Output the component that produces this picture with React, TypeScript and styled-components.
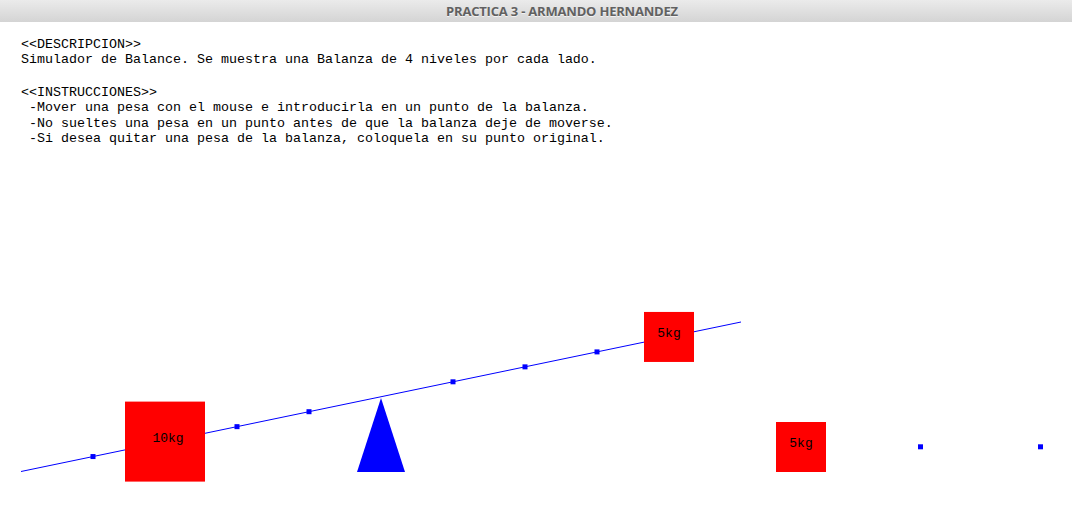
import React from "react";
import styled, { createGlobalStyle } from "styled-components";

const GlobalStyle = createGlobalStyle`
  html, body {
    margin: 0;
    padding: 0;
    background: #fff;
  }
  body {
    width: 1072px;
    height: 512px;
    overflow: hidden;
  }
`;

const PIVOT_X = 381;
const PIVOT_Y = 396.75;
const SLOPE = -149.5 / 720;
const STEP = 72;

const beamY = (x: number) => PIVOT_Y + (x - PIVOT_X) * SLOPE;

interface Weight {
  label: string;
  x: number;
  y: number;
  size: number;
}

const slots = [-4, -3, -2, -1, 1, 2, 3, 4].map((k) => PIVOT_X + k * STEP);

const weights: Array<Weight> = [
  { label: "10kg", x: PIVOT_X - 3 * STEP, y: beamY(PIVOT_X - 3 * STEP), size: 80 },
  { label: "5kg", x: PIVOT_X + 4 * STEP, y: beamY(PIVOT_X + 4 * STEP), size: 50 },
  { label: "5kg", x: 801, y: 447, size: 50 },
];

const homeSpots = [920.5, 1040.5];

function App() {
  return (
    <>
      <GlobalStyle />
      <Window>
        <TitleBar>PRACTICA 3 - ARMANDO HERNANDEZ</TitleBar>
        <Info>
          <Block>
            <Line>{"<<DESCRIPCION>>"}</Line>
            <Line>Simulador de Balance. Se muestra una Balanza de 4 niveles por cada lado.</Line>
          </Block>
          <Block>
            <Line>{"<<INSTRUCCIONES>>"}</Line>
            <Line> -Mover una pesa con el mouse e introducirla en un punto de la balanza.</Line>
            <Line> -No sueltes una pesa en un punto antes de que la balanza deje de moverse.</Line>
            <Line> -Si desea quitar una pesa de la balanza, coloquela en su punto original.</Line>
          </Block>
        </Info>
        <Stage>
          <svg width="1072" height="352" viewBox="0 160 1072 352">
            <line x1={21} y1={beamY(21)} x2={741} y2={beamY(741)} stroke="#0000ff" strokeWidth={1} />
            <polygon points="381,398 405,472 357,472" fill="#0000ff" />
            {slots.map((x) => (
              <rect key={x} x={x - 2.5} y={beamY(x) - 2.5} width={5} height={5} fill="#0000ff" />
            ))}
            {homeSpots.map((x) => (
              <rect key={x} x={x - 2.5} y={444.3} width={5} height={5} fill="#0000ff" />
            ))}
            {weights.map((w, i) => (
              <g key={i}>
                <rect x={w.x - w.size / 2} y={w.y - w.size / 2} width={w.size} height={w.size} fill="#ff0000" />
                <WeightLabel x={w.x + (w.size > 60 ? 3 : 0)} y={w.y} textAnchor="middle">
                  {w.label}
                </WeightLabel>
              </g>
            ))}
          </svg>
        </Stage>
      </Window>
    </>
  );
}

export default App;

const Window = styled.div`
  width: 1072px;
  height: 512px;
  display: flex;
  flex-direction: column;
  background: #fff;
`;

const TitleBar = styled.div`
  height: 22px;
  flex-shrink: 0;
  display: flex;
  align-items: center;
  justify-content: center;
  padding-left: 52px;
  box-sizing: border-box;
  background: linear-gradient(#ebebeb, #d4d4d4);
  font-family: "Open Sans", "Liberation Sans", sans-serif;
  font-weight: 700;
  font-size: 13px;
  letter-spacing: -0.2px;
  color: #616161;
  text-shadow: 0 1px 0 rgba(255, 255, 255, 0.7);
`;

const Info = styled.div`
  height: 138px;
  flex-shrink: 0;
  padding: 14.75px 0 0 21px;
  box-sizing: border-box;
  display: flex;
  flex-direction: column;
  gap: 17px;
  font-family: "Liberation Mono", "DejaVu Sans Mono", monospace;
  font-size: 13.33px;
  color: #000;
`;

const Block = styled.div`
  display: flex;
  flex-direction: column;
`;

const Line = styled.div`
  height: 15.5px;
  line-height: 15.5px;
  white-space: pre;
`;

const Stage = styled.div`
  flex: 1;
  svg {
    display: block;
  }
`;

const WeightLabel = styled.text`
  font-family: "Liberation Mono", "DejaVu Sans Mono", monospace;
  font-size: 13px;
  fill: #000;
`;
